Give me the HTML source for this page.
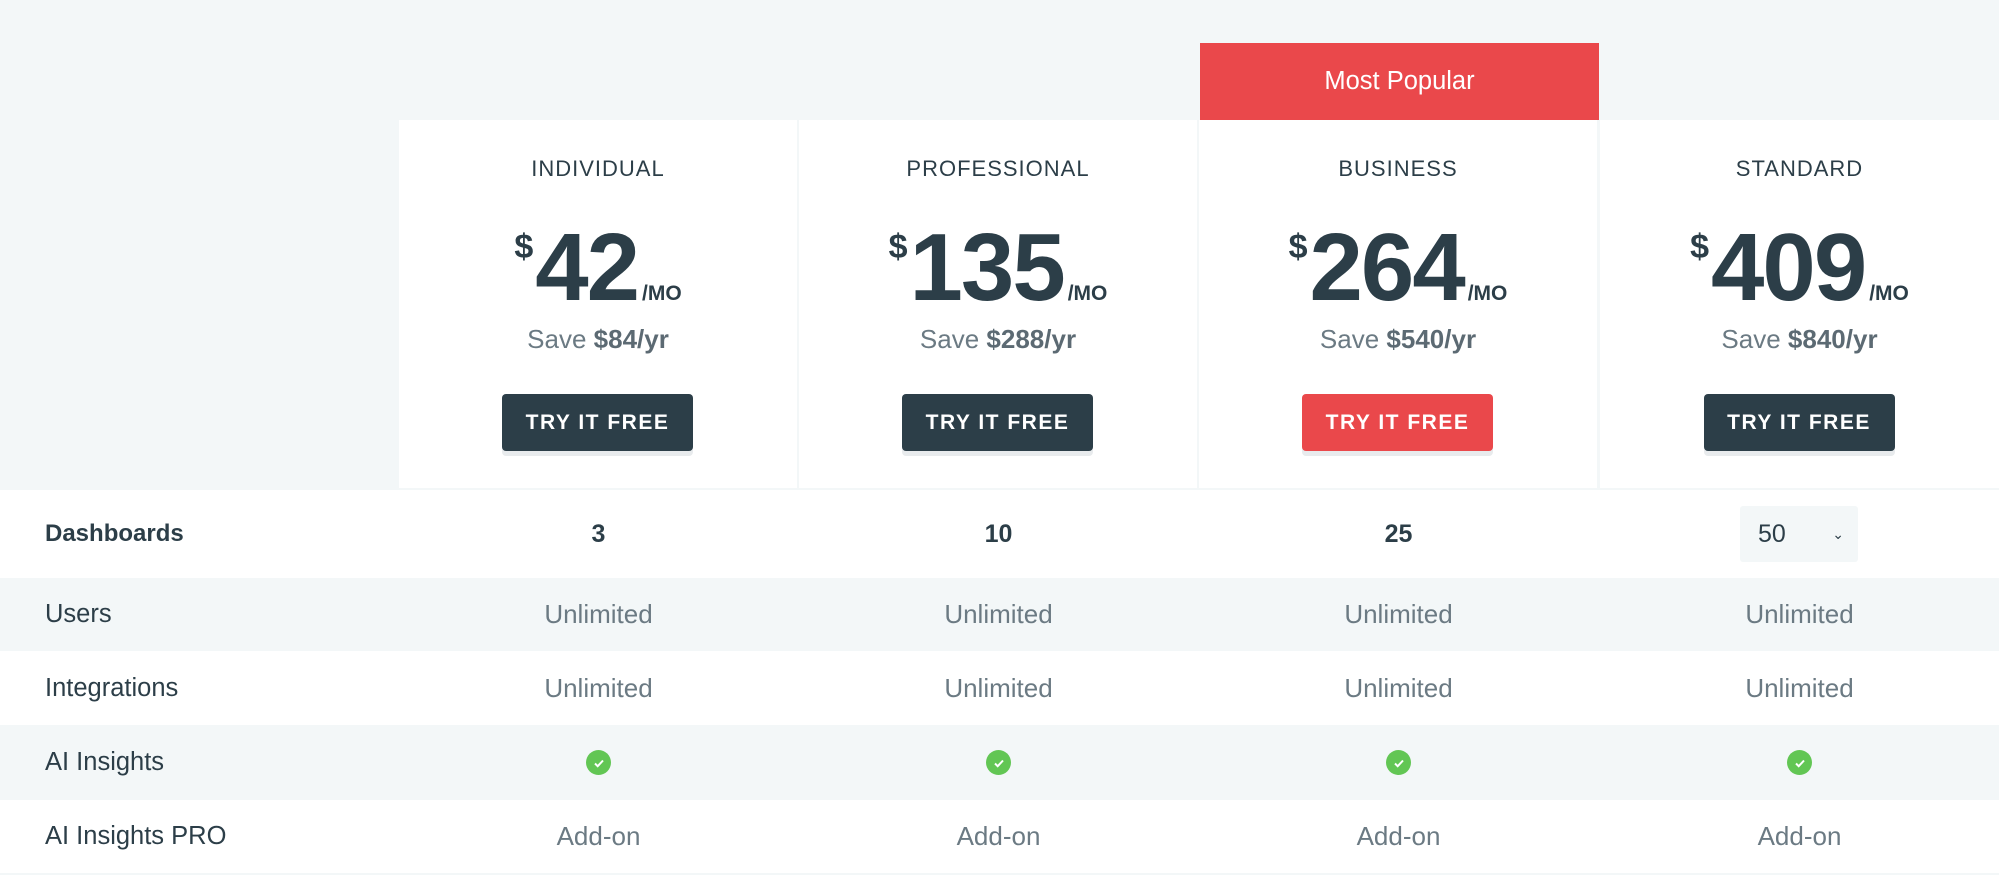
<!DOCTYPE html>
<html><head><meta charset="utf-8"><style>
*{margin:0;padding:0;box-sizing:border-box}
body{width:1999px;height:875px;background:#f3f7f8;font-family:"Liberation Sans",sans-serif;color:#2c3e48;position:relative;overflow:hidden}
.pop{position:absolute;left:1200px;top:43px;width:399px;height:77px;background:#ea484b;color:#fff;font-size:25.5px;text-align:center;line-height:77px}
.card{position:absolute;top:120px;height:368px;width:398px;background:#fff;text-align:center}
.name{position:absolute;top:156px;left:0;right:0;font-size:22px;letter-spacing:1px;color:#2c3e48}
.price{position:absolute;top:218px;left:0;right:0;height:100px;font-weight:bold;white-space:nowrap}
.price .d{font-size:34px;vertical-align:top;position:relative;top:10px;margin-right:2px}
.price .n{font-size:96px;line-height:100px;letter-spacing:-2px}
.price .m{font-size:21px;font-weight:bold;letter-spacing:0;margin-left:4px}
.save{position:absolute;top:325px;left:0;right:0;font-size:26px;color:#6b7a83}
.save b{color:#5c6a73}
.btn{position:absolute;top:274px;left:50%;margin-left:-96px;width:191px;height:57px;border-radius:4px;background:#2c3e48;color:#fff;font-weight:bold;font-size:21px;letter-spacing:1.5px;line-height:57px;box-shadow:0 5px 0 #e8ebed}
.red{background:#ea484b}
.row{position:absolute;left:0;width:1999px}
.row div{position:absolute;top:0;height:100%;display:flex;align-items:center;justify-content:center;width:399px;font-size:26px;color:#6b7a83}
.row .l{left:45px;justify-content:flex-start;color:#2c3e48;width:350px;font-size:25.5px}
.c1{left:399px}.c2{left:799px}.c3{left:1199px}.c4{left:1600px}
.chk{width:25px;height:25px;border-radius:50%;background:#62c654;display:flex;align-items:center;justify-content:center}
</style></head><body>
<div class="pop">Most Popular</div>
<div class="card" style="left:399px"><div class="name" style="top:36px">INDIVIDUAL</div><div class="price" style="top:98px"><span class="d">$</span><span class="n">42</span><span class="m">/MO</span></div><div class="save" style="top:204px">Save <b>$84/yr</b></div><div class="btn">TRY IT FREE</div></div>
<div class="card" style="left:799px"><div class="name" style="top:36px">PROFESSIONAL</div><div class="price" style="top:98px"><span class="d">$</span><span class="n">135</span><span class="m">/MO</span></div><div class="save" style="top:204px">Save <b>$288/yr</b></div><div class="btn">TRY IT FREE</div></div>
<div class="card" style="left:1199px"><div class="name" style="top:36px">BUSINESS</div><div class="price" style="top:98px"><span class="d">$</span><span class="n">264</span><span class="m">/MO</span></div><div class="save" style="top:204px">Save <b>$540/yr</b></div><div class="btn red">TRY IT FREE</div></div>
<div class="card" style="left:1600px;width:399px"><div class="name" style="top:36px">STANDARD</div><div class="price" style="top:98px"><span class="d">$</span><span class="n">409</span><span class="m">/MO</span></div><div class="save" style="top:204px">Save <b>$840/yr</b></div><div class="btn">TRY IT FREE</div></div>

<div class="row" style="top:490px;height:88px;background:#fff"><div class="l" style="font-weight:bold;font-size:24px">Dashboards</div><div class="c1" style="color:#2c3e48;font-weight:bold;font-size:25px">3</div><div class="c2" style="color:#2c3e48;font-weight:bold;font-size:25px">10</div><div class="c3" style="color:#2c3e48;font-weight:bold;font-size:25px">25</div>
<div style="left:1740px;top:16px;width:118px;height:56px;background:#f3f7f8;border-radius:3px;justify-content:space-between;padding:0 14px 0 18px;color:#2c3e48;font-size:25px">50<span style="font-size:14px">&#8964;</span></div></div>
<div class="row" style="top:578px;height:73px"><div class="l">Users</div><div class="c1">Unlimited</div><div class="c2">Unlimited</div><div class="c3">Unlimited</div><div class="c4">Unlimited</div></div>
<div class="row" style="top:651px;height:74px;background:#fff"><div class="l">Integrations</div><div class="c1">Unlimited</div><div class="c2">Unlimited</div><div class="c3">Unlimited</div><div class="c4">Unlimited</div></div>
<div class="row" style="top:725px;height:75px"><div class="l">AI Insights</div>
<div class="c1"><span class="chk"><svg width="14" height="14" viewBox="0 0 14 14"><path d="M3 7.5l2.7 2.7L11 4.5" fill="none" stroke="#fff" stroke-width="2"/></svg></span></div>
<div class="c2"><span class="chk"><svg width="14" height="14" viewBox="0 0 14 14"><path d="M3 7.5l2.7 2.7L11 4.5" fill="none" stroke="#fff" stroke-width="2"/></svg></span></div>
<div class="c3"><span class="chk"><svg width="14" height="14" viewBox="0 0 14 14"><path d="M3 7.5l2.7 2.7L11 4.5" fill="none" stroke="#fff" stroke-width="2"/></svg></span></div>
<div class="c4"><span class="chk"><svg width="14" height="14" viewBox="0 0 14 14"><path d="M3 7.5l2.7 2.7L11 4.5" fill="none" stroke="#fff" stroke-width="2"/></svg></span></div></div>
<div class="row" style="top:800px;height:73px;background:#fff"><div class="l">AI Insights PRO</div><div class="c1">Add-on</div><div class="c2">Add-on</div><div class="c3">Add-on</div><div class="c4">Add-on</div></div>
</body></html>
